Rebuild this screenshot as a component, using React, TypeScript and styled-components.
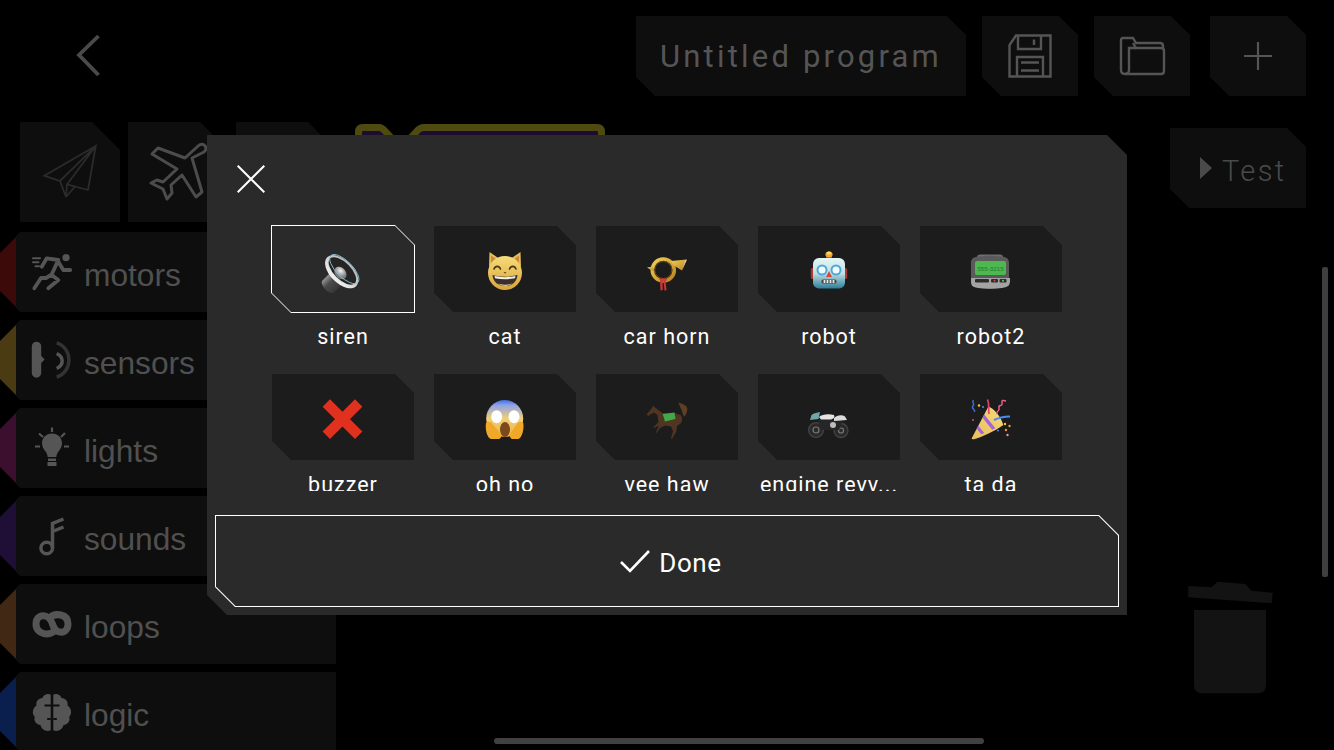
import React from "react";
import styled, { createGlobalStyle, css } from "styled-components";

const Global = createGlobalStyle`
  html, body { margin: 0; padding: 0; background: #000; }
  body { font-family: "Liberation Sans", Arial, sans-serif; }
`;

const notch = (s: number) => css`
  clip-path: polygon(0 0, calc(100% - ${s}px) 0, 100% ${s}px, 100% 100%, ${s}px 100%, 0 calc(100% - ${s}px));
`;

const Page = styled.div`
  position: relative;
  width: 1334px;
  height: 750px;
  overflow: hidden;
  background: #000;
  display: flex;
  flex-direction: column;
`;

const Header = styled.header`
  display: flex;
  align-items: flex-start;
  height: 96px;
  padding: 16px 28px 0 76px;
  box-sizing: border-box;
  flex: none;
`;

const BackButton = styled.div`
  margin-top: 18px;
  width: 26px;
  height: 44px;
  margin-right: auto;
`;

const HeadButton = styled.div<{ $w?: number; $ml?: number }>`
  ${notch(19)}
  width: ${(p) => p.$w ?? 96}px;
  height: 80px;
  margin-left: ${(p) => p.$ml ?? 16}px;
  background: #0e0e0e;
  display: flex;
  align-items: center;
  justify-content: center;
  flex: none;
`;

const ProgramName = styled.span`
  font-family: Roboto, sans-serif;
  font-weight: 400;
  font-size: 31px;
  letter-spacing: 3.2px;
  color: #555;
`;

const Main = styled.main`
  display: grid;
  grid-template-columns: 336px 1fr 164px;
  margin-top: 26px;
  flex: 1;
`;

const LeftColumn = styled.section`
  display: flex;
  flex-direction: column;
`;

const ToolRow = styled.div`
  display: flex;
  gap: 8px;
  padding-left: 20px;
  height: 100px;
`;

const ToolTile = styled.div`
  clip-path: polygon(0 0, 72px 0, 100% 28px, 100% 100%, 0 100%);
  width: 100px;
  height: 100px;
  background: #0e0e0e;
  display: flex;
  align-items: center;
  justify-content: center;
  flex: none;
`;

const Categories = styled.nav`
  display: flex;
  flex-direction: column;
  gap: 8px;
  margin-top: 10px;
`;

const Category = styled.div`
  display: flex;
  height: 80px;
  flex: none;
`;

const CategoryTab = styled.div<{ $color: string }>`
  width: 16px;
  flex: none;
  background: ${(p) => p.$color};
  clip-path: polygon(0 21px, 16px 5px, 16px 75px, 0 59px);
`;

const CategoryBody = styled.div`
  flex: 1;
  background: #0e0e0e;
  clip-path: polygon(4px 0, 100% 0, 100% 100%, 4px 100%, 0 76px, 0 4px);
  display: flex;
  align-items: center;
  padding-left: 16px;
  gap: 12px;
`;

const CategoryIcon = styled.svg`
  width: 40px;
  height: 40px;
  flex: none;
  overflow: visible;
`;

const CategoryName = styled.span`
  font-size: 31.7px;
  color: #505050;
  margin-top: 6px;
`;

const CanvasColumn = styled.section`
  padding: 2px 0 0 19px;
`;

const ProgramBlock = styled.svg`
  display: block;
  width: 250px;
  height: 60px;
`;

const RightRail = styled.aside`
  padding-top: 6px;
  display: flex;
  flex-direction: column;
  align-items: flex-start;
`;

const TestButton = styled.div`
  ${notch(19)}
  width: 136px;
  height: 80px;
  background: #0e0e0e;
  display: flex;
  align-items: center;
  padding-left: 30px;
  box-sizing: border-box;
  gap: 10px;
`;

const TestLabel = styled.span`
  font-family: Roboto, sans-serif;
  font-weight: 300;
  font-size: 29px;
  letter-spacing: 2.4px;
  color: #4a4a4a;
  margin-top: 5px;
`;

const Trash = styled.svg`
  display: block;
  width: 86px;
  height: 112px;
  margin: 374px 0 0 18px;
  overflow: visible;
`;

const ScrollThumb = styled.div`
  position: absolute;
  left: 1322px;
  top: 267px;
  width: 6px;
  height: 310px;
  border-radius: 2px;
  background: #3f3f3f;
`;

const HomeBar = styled.div`
  position: absolute;
  left: 494px;
  top: 738px;
  width: 490px;
  height: 6px;
  border-radius: 3px;
  background: #414141;
`;

const Modal = styled.div`
  ${notch(20)}
  position: absolute;
  left: 207px;
  top: 135px;
  width: 920px;
  height: 480px;
  background: #2a2a2a;
  box-sizing: border-box;
  padding: 0 8px;
  display: flex;
  flex-direction: column;
`;

const CloseButton = styled.div`
  width: 28px;
  height: 28px;
  margin: 30px 0 0 22px;
  flex: none;
`;

const Scroller = styled.div`
  height: 266px;
  margin-top: 32px;
  overflow: hidden;
  flex: none;
  padding-left: 56px;
`;

const SoundGrid = styled.div`
  display: grid;
  grid-template-columns: repeat(5, 144px);
  column-gap: 18px;
  grid-auto-rows: 148px;
`;

const Sound = styled.div`
  display: flex;
  flex-direction: column;
  align-items: center;
`;

const TileFrame = styled.div<{ $selected?: boolean }>`
  ${notch(20)}
  width: 144px;
  height: 88px;
  padding: 1px;
  box-sizing: border-box;
  background: ${(p) => (p.$selected ? "#fff" : "transparent")};
  flex: none;
`;

const TileFill = styled.div<{ $selected?: boolean }>`
  ${notch(19)}
  height: 100%;
  background: ${(p) => (p.$selected ? "#2a2a2a" : "#1c1c1c")};
  display: flex;
  align-items: center;
  justify-content: center;
`;

const Emoji = styled.svg`
  width: 44px;
  height: 44px;
  margin-top: 4px;
  overflow: visible;
`;

const SoundName = styled.span`
  font-family: Roboto, sans-serif;
  font-size: 21.5px;
  letter-spacing: 1px;
  line-height: 26px;
  margin-top: 11px;
  color: #fff;
  white-space: nowrap;
`;

const DoneFrame = styled.div`
  ${notch(20)}
  margin-top: 24px;
  height: 92px;
  padding: 1px;
  box-sizing: border-box;
  background: #fff;
  flex: none;
`;

const DoneFill = styled.div`
  ${notch(19.5)}
  height: 100%;
  background: #2a2a2a;
  display: flex;
  align-items: center;
  justify-content: center;
  gap: 9px;
  padding-left: 8px;
  box-sizing: border-box;
`;

const DoneLabel = styled.span`
  font-family: Roboto, sans-serif;
  font-size: 26px;
  letter-spacing: 0.6px;
  color: #fff;
  margin-top: 3px;
`;

const G = "#555";

const icons: Record<string, React.ReactNode> = {
  motors: (
    <g fill="none" stroke={G} strokeWidth="3.800" strokeLinecap="round" strokeLinejoin="round">
      <circle cx="34" cy="5.700" r="3.600" fill={G} stroke="none" />
      <path d="M26.300 8 19.700 22.500M26.300 9.700 31.300 18H38.200M26.300 8 14.700 6.300 9.700 14.700" />
      <path d="M19.700 23 26.300 28 16.300 36.300M19 23 14 26H9L2.300 36.300" />
      <path d="M1 6.300H8M1 10.300H6.500M3.500 14.300H7" strokeWidth="2" />
    </g>
  ),
  sensors: (
    <g fill="none">
      <path d="M4.500 1.700a4.700 4.700 0 0 1 4.700 4.700v9.400l3.400 3.600-3.400 3.600v10a4.700 4.700 0 0 1-9.400 0V6.400a4.700 4.700 0 0 1 4.700-4.700z" fill={G} />
      <path d="M24.700 13.500C32 17 32 25 24.700 28.500" stroke={G} strokeWidth="3.500" />
      <path d="M24.700 2.800C41 8 41 32 24.700 37" stroke="#333" strokeWidth="3.500" />
    </g>
  ),
  lights: (
    <g fill={G} stroke="none">
      <path d="M20 5.500c-6 0-10 4.400-10 9.700 0 4 2 6 3.600 8.400 1 1.500 1.900 3.400 2.100 5.400h8.600c.2-2 1.100-3.900 2.100-5.400C28 21.200 30 19.200 30 15.200c0-5.300-4-9.700-10-9.700z" />
      <rect x="16" y="30.500" width="8" height="2.500" />
      <rect x="15.500" y="34" width="9" height="4" />
      <g stroke={G} strokeWidth="2.200">
        <path d="M20 -.5V4M3 18.500H8M32 18.500H37M7 5.500 11 9M33 5 29 9" />
      </g>
    </g>
  ),
  sounds: (
    <g fill="none" stroke={G} strokeWidth="3.500">
      <circle cx="14.700" cy="32" r="5.800" />
      <path d="M20.500 32V7.500L31.500 3M20.500 15.500 31.500 11" />
    </g>
  ),
  loops: (
    <path
      d="M23.500 26C18 32.500 4 31 4 20 4 9.500 17 8.500 20.500 20 23.500 31.500 36 30.500 36 20 36 9.500 23 8.500 17.500 14"
      fill="none"
      stroke={G}
      strokeWidth="7"
    />
  ),
  logic: (
    <g fill={G}>
      <path d="M18.700 2.600C15.500 1 11.500 2.800 10.500 6 6.500 6.200 3.500 9.500 4.500 13.500.8 15.800-.6 21.500 2.800 24.800 1.500 29 4 32.600 8.500 33c1 4.500 6 7.400 10.200 5.200z" />
      <path d="M21.300 2.600C24.500 1 28.500 2.800 29.500 6c4 .2 7 3.500 6 7.500 3.700 2.300 5.100 8 1.700 11.300 1.300 4.200-1.200 7.800-5.700 8.200-1 4.500-6 7.400-10.200 5.200z" />
      <path d="M12.500 13.500h6.500M21 13.500h6.500M18.700 27h-3.500M21.300 27h3.500" stroke="#0e0e0e" strokeWidth="1.800" fill="none" />
    </g>
  ),
};

const EmojiDefs = () => (
  <svg width="0" height="0" style={{ position: "absolute" }}>
    <defs>
      <linearGradient id="gCat" x1="0" y1="0" x2="0" y2="1">
        <stop offset="0" stopColor="#f6dc7a" />
        <stop offset="1" stopColor="#d9a63a" />
      </linearGradient>
      <linearGradient id="gRobot" x1="0" y1="0" x2="0" y2="1">
        <stop offset="0" stopColor="#e6f6f6" />
        <stop offset=".5" stopColor="#bfe0e4" />
        <stop offset="1" stopColor="#2f7f98" />
      </linearGradient>
      <linearGradient id="gScream" x1="0" y1="0" x2="0" y2="1">
        <stop offset="0" stopColor="#3f6fe0" />
        <stop offset=".14" stopColor="#8fa3e8" />
        <stop offset=".5" stopColor="#efcf78" />
        <stop offset="1" stopColor="#f3b23a" />
      </linearGradient>
      <linearGradient id="gChrome" x1="0" y1="0" x2="0" y2="1">
        <stop offset="0" stopColor="#b5b5b5" />
        <stop offset="1" stopColor="#f2f2f2" />
      </linearGradient>
      <linearGradient id="gCone" x1="0" y1="0" x2="1" y2="1">
        <stop offset="0" stopColor="#dcdcdc" />
        <stop offset=".45" stopColor="#4a4a4a" />
        <stop offset="1" stopColor="#2a2a2a" />
      </linearGradient>
      <linearGradient id="gParty" x1="0" y1="1" x2="1" y2="0">
        <stop offset="0" stopColor="#e9bf5e" />
        <stop offset="1" stopColor="#f6d977" />
      </linearGradient>
      <linearGradient id="gHorn" x1="0" y1="0" x2="1" y2="1">
        <stop offset="0" stopColor="#f1cf58" />
        <stop offset="1" stopColor="#b98320" />
      </linearGradient>
      <radialGradient id="gDome" cx=".4" cy=".35">
        <stop offset="0" stopColor="#f4f4f4" />
        <stop offset="1" stopColor="#7b7b7b" />
      </radialGradient>
    </defs>
  </svg>
);

const emojis: Record<string, React.ReactNode> = {
  siren: (
    <>
      <path d="M1 32 10 23l12 12-9 8.500c-2.500 1-6 0-8.500-3S0 34.500 1 32z" fill="url(#gCone)" />
      <g transform="rotate(45 20.700 22.700)">
        <ellipse cx="20.700" cy="22.700" rx="20.500" ry="11.500" fill="url(#gChrome)" />
        <ellipse cx="20.700" cy="21.700" rx="17.500" ry="8.500" fill="#242424" />
        <ellipse cx="20.700" cy="24.500" rx="7" ry="5.200" fill="url(#gDome)" />
        <ellipse cx="20.700" cy="19" rx="19" ry="8" fill="none" stroke="#86c0d0" strokeWidth=".9" />
      </g>
    </>
  ),
  cat: (
    <>
      <path d="M6.500 3 16 9.500 6 18zM37.500 3 28 9.500 38 18z" fill="#e7bd55" />
      <path d="M8 6.500 13 10 8 14zM36 6.500 31 10 36 14z" fill="#c98a3c" />
      <ellipse cx="22" cy="24" rx="17" ry="17" fill="url(#gCat)" />
      <path d="M11 20c1.500-3.500 5-3.500 6.500 0M26.500 20c1.500-3.500 5-3.500 6.500 0" fill="none" stroke="#4a3418" strokeWidth="1.600" strokeLinecap="round" />
      <path d="M20.500 23h3l-1.500 1.800z" fill="#6b4a2a" />
      <path d="M9.500 26c8 2.300 17 2.300 25 0-.5 7-6 11-12.500 11S10 33 9.500 26z" fill="#3a2f2a" />
      <path d="M11.500 27c7 1.500 14 1.500 21 0l-.5 2.300c-6.500 1.200-13.500 1.200-20 0z" fill="#f5f1e6" />
      <path d="M15 34.500c4 1.500 10 1.500 14 0-2.500 1.800-5 2.500-7 2.500s-4.500-.7-7-2.500z" fill="#c9c3b4" />
    </>
  ),
  horn: (
    <>
      <circle cx="18.300" cy="21" r="11" fill="none" stroke="url(#gHorn)" strokeWidth="3.600" />
      <circle cx="18.300" cy="21" r="8.500" fill="none" stroke="#7a5414" strokeWidth=".8" />
      <path d="M26 12 41.700 10.500 37 21.500 28 16z" fill="url(#gHorn)" />
      <path d="M40.500 10.800 37.300 20.500 41.800 11z" fill="#d8d2b8" />
      <path d="M2 18.500 8 17.500 9.500 22.500 6 21z" fill="url(#gHorn)" />
      <path d="M14 29.500h8.500l-1.500 3h-5.500z" fill="#d63b3b" />
      <path d="M15 32 15.500 41.500 17.800 41 17.500 32zM18.500 32 19.500 41.800 21.500 41 20.500 32z" fill="#c93636" />
    </>
  ),
  robot: (
    <>
      <path d="M19 7c0-2.500 6-2.500 6 0v3h-6z" fill="#6a4a90" />
      <ellipse cx="22" cy="5.500" rx="3.600" ry="3" fill="#f2a72c" />
      <ellipse cx="22" cy="4" rx="2.400" ry="1.500" fill="#ffd95e" />
      <rect x="3.800" y="19" width="4" height="11" rx="1.500" fill="#a83a30" />
      <rect x="36.200" y="19" width="4" height="11" rx="1.500" fill="#a83a30" />
      <rect x="6" y="9" width="32" height="30.500" rx="6" fill="url(#gRobot)" />
      <circle cx="15" cy="21" r="4.500" fill="#f2fbff" stroke="#4ea8d8" strokeWidth="2" />
      <circle cx="29" cy="21" r="4.500" fill="#f2fbff" stroke="#4ea8d8" strokeWidth="2" />
      <path d="M22 22 25 28H19z" fill="#d04b3c" />
      <rect x="14.500" y="30.500" width="15" height="4" rx="1.500" fill="#40484c" />
      <path d="M17.500 31v3M20.500 31v3M23.500 31v3M26.500 31v3" stroke="#e8e8e8" strokeWidth="1.800" />
    </>
  ),
  pager: (
    <>
      <rect x="8" y="5.500" width="26" height="6" rx="3" fill="#6e6e6e" />
      <path d="M2 14c0-5 3-6 8-6.500 8-1 14-1 22 0 5 .5 8 1.500 8 6.500v18c0 5-3 6-8 7-8 1-14 1-22 0-5-1-8-2-8-7z" fill="#5a5a5a" />
      <path d="M2 29h39v3c0 5-3 6-8 7-8 1-16 1-24 0-5-1-7-2-7-7z" fill="#a3a3a3" />
      <rect x="6" y="12" width="31" height="14" rx="2" fill="#4cb84f" />
      <text x="21.500" y="21.500" textAnchor="middle" fontFamily="Liberation Sans, sans-serif" fontSize="6.200" fill="#257a2c">555-3215</text>
      <rect x="6" y="30" width="14" height="3.500" rx="1" fill="#2c2c2c" />
      <rect x="22" y="30" width="7" height="3.500" rx="1" fill="#2c2c2c" />
      <rect x="30.500" y="30" width="7" height="3.500" rx="1" fill="#2c2c2c" />
      <circle cx="25.500" cy="31.800" r="1" fill="#e23a3a" />
      <circle cx="34" cy="31.800" r="1" fill="#4ad84a" />
    </>
  ),
  cross: <path d="M5.300 6 37.700 38.300M37.700 6 5.300 38.300" stroke="#e0301e" strokeWidth="10.400" fill="none" />,
  scream: (
    <>
      <circle cx="21.700" cy="21.500" r="18.500" fill="url(#gScream)" />
      <ellipse cx="13.700" cy="19.700" rx="5.500" ry="6.500" fill="#fff" />
      <ellipse cx="31" cy="19.700" rx="5.500" ry="6.500" fill="#fff" />
      <ellipse cx="22" cy="32.500" rx="5" ry="7.500" fill="#7a4a1e" />
      <path d="M3 26c2-2 5-1.500 6.500 1l8 9.500c1.500 2.500.5 5-1.500 5.500H8C4 41 2 32 3 26z" fill="#f0a828" />
      <path d="M40.300 26c-2-2-5-1.500-6.500 1l-6.500 9.500c-1 2.500 0 5 1.500 5.500h6.500C39 41 41.300 32 40.300 26z" fill="#f0a828" />
    </>
  ),
  horse: (
    <>
      <path
        d="M1.700 17.300 7 11l1.300-2.500L10 10.500 17.700 16.300 30 16.300 35.700 18C38 21 37.500 25 35 27L32 29 31.500 34 27 42 26 41.500 28 34 26 29.500 20 28.500 15 31 11.500 36.300 11 35 14 28.500 9 31 8.500 30 13.500 25 12.500 18 9 15.500 3 19z"
        fill="#4f3522"
      />
      <path d="M33.300 5.300C38 7 42 9 42.300 11.300 42.500 15 41 18 39 19.700 37.500 17 37 13 35.500 11z" fill="#5e3f26" />
      <path d="M17.700 17 29.500 15.500 30.500 22 20 24.500z" fill="#43a848" />
    </>
  ),
  moto: (
    <>
      <circle cx="9" cy="33" r="7.400" fill="#2a2a2a" stroke="#444" strokeWidth="1.300" />
      <circle cx="9" cy="33" r="3" fill="none" stroke="#777" strokeWidth="1.200" />
      <circle cx="34" cy="33.500" r="7" fill="#2a2a2a" stroke="#444" strokeWidth="1.300" />
      <circle cx="34" cy="33.500" r="2.500" fill="none" stroke="#777" strokeWidth="1.200" />
      <path d="M11 23h25l-4 10H14z" fill="#262626" />
      <path d="M3 23 4.500 18C7 16 10 15.500 13 15L11.500 22z" fill="#6fa6a8" />
      <path d="M12 20c3-3 10-3.500 15-2 1 2 0 4-3 4.500H14z" fill="#e4e4e4" />
      <path d="M27 21c3-3 8-3.500 11-1.500l2 3.500-13 1z" fill="#dadada" />
      <circle cx="26" cy="28" r="3" fill="#bdbdbd" />
    </>
  ),
  party: (
    <>
      <path d="M2.700 41.300 19.300 9.700C25 11 32 20 34.300 28 26 34 13 40 5 42.300 3.500 42.500 2.500 42 2.700 41.300z" fill="url(#gParty)" />
      <path d="M7.700 31.800 12.200 37.300 15.300 36 9.300 28.700zM13.500 20.800 23.200 32.700 26.400 31.300 15.200 17.600z" fill="#a565d8" />
      <path d="M25 23c4-2 9-3.300 16-3.500" fill="none" stroke="#4a8cf0" strokeWidth="2" />
      <path d="M20 17C19 12 21 8 18.500 2.500" fill="none" stroke="#e0466e" strokeWidth="1.700" />
      <path d="M4.500 3C2 6 6.500 6 4 9s3 3 1.500 6" fill="none" stroke="#3f68d8" strokeWidth="1.500" />
      <path d="M28 17c-1-4 3-2 2-6s4-1 3-5 3-2 4-2" fill="none" stroke="#e95d8a" strokeWidth="1.500" />
      <circle cx="10" cy="8.500" r="1.200" fill="#f0c93c" />
      <circle cx="14" cy="10" r="1" fill="#4a8cf0" />
      <circle cx="36" cy="27" r="1.200" fill="#f0c93c" />
      <circle cx="40.500" cy="29" r="1.200" fill="#eb9a3c" />
      <circle cx="37" cy="33" r="1.200" fill="#eb9a3c" />
      <circle cx="38.500" cy="38" r="1.200" fill="#e98ac0" />
      <circle cx="29" cy="33.500" r="1" fill="#4a8cf0" />
      <circle cx="4" cy="23" r="1" fill="#d64a6a" />
    </>
  ),
};

const categories = [
  { name: "motors", color: "#3d0a0a" },
  { name: "sensors", color: "#4b3b12" },
  { name: "lights", color: "#3b0f2d" },
  { name: "sounds", color: "#1f0e36" },
  { name: "loops", color: "#412814" },
  { name: "logic", color: "#0b1f4e" },
];

const sounds = [
  { name: "siren", icon: "siren", selected: true },
  { name: "cat", icon: "cat" },
  { name: "car horn", icon: "horn" },
  { name: "robot", icon: "robot" },
  { name: "robot2", icon: "pager" },
  { name: "buzzer", icon: "cross" },
  { name: "oh no", icon: "scream" },
  { name: "vee haw", icon: "horse" },
  { name: "engine revv...", icon: "moto" },
  { name: "ta da", icon: "party" },
];

export default function App() {
  return (
    <Page>
      <Global />
      <EmojiDefs />
      <Header>
        <BackButton>
          <svg width="26" height="44" viewBox="0 0 26 44" fill="none">
            <path d="M22.500 2 3 21l19.500 20" stroke="#4a4a4a" strokeWidth="3.800" />
          </svg>
        </BackButton>
        <HeadButton $w={330} $ml={0}>
          <ProgramName>Untitled program</ProgramName>
        </HeadButton>
        <HeadButton>
          <svg width="44" height="44" viewBox="0 0 44 44" fill="none" stroke="#555" strokeWidth="2.400">
            <path d="M8 1.500H42.500V42.500H1.500V11z" />
            <path d="M10 1.500V15H33V1.500M26 5.500V11M9 42.500V23H35V42.500M13 28.500H31M13 36.500H31" />
          </svg>
        </HeadButton>
        <HeadButton>
          <svg width="48" height="40" viewBox="0 0 48 40" fill="none" stroke="#555" strokeWidth="2.400">
            <path d="M3 34V4q0-2 2-2h10l3 5h24q3 0 3 3v2" />
            <path d="M7 38h36q3 0 3-3V15q0-3-3-3H18l-3-5" />
            <path d="M3 34q0 4 4 4t4-4V12h7" />
          </svg>
        </HeadButton>
        <HeadButton $ml={20}>
          <svg width="30" height="30" viewBox="0 0 30 30" stroke="#555" strokeWidth="2.200">
            <path d="M15 1V29M1 15H29" />
          </svg>
        </HeadButton>
      </Header>

      <Main>
        <LeftColumn>
          <ToolRow>
            <ToolTile>
              <svg width="100" height="100" viewBox="0 0 100 100" fill="none" stroke="#2b2b2b" strokeWidth="1.800">
                <path d="M75.700 24 24.300 53.700 40 59 75.700 24 68 68 47 62.500 46 75 40 59M47 62.500 75.700 24M46 75 55 64.500" />
              </svg>
            </ToolTile>
            <ToolTile>
              <svg width="100" height="100" viewBox="0 0 100 100" fill="none" stroke="#4c4c4c" strokeWidth="3" strokeLinejoin="round">
                <path d="M57 36 30 26 24 32 49 47 35 60 29 58 23 61 35 67 39 77 44 71 43 63 54 53 68 75 74 70 64 36 76 30Q80 26 76 23 73 21 69 25Z" />
              </svg>
            </ToolTile>
            <ToolTile />
          </ToolRow>
          <Categories>
            {categories.map((c) => (
              <Category key={c.name}>
                <CategoryTab $color={c.color} />
                <CategoryBody>
                  <CategoryIcon viewBox="0 0 40 40">{icons[c.name]}</CategoryIcon>
                  <CategoryName>{c.name}</CategoryName>
                </CategoryBody>
              </Category>
            ))}
          </Categories>
        </LeftColumn>

        <CanvasColumn>
          <ProgramBlock viewBox="0 0 250 60" fill="#1c0c30" stroke="#4f4a10" strokeWidth="7">
            <path d="M3.500 60V8Q3.500 3.500 8 3.500H24Q27 3.500 30 7L42 20H50L62 7Q65 3.500 69 3.500H242Q246.500 3.500 246.500 8V60Z" />
          </ProgramBlock>
        </CanvasColumn>

        <RightRail>
          <TestButton>
            <svg width="12" height="22" viewBox="0 0 12 22">
              <path d="M0 0 12 11 0 22z" fill="#4a4a4a" />
            </svg>
            <TestLabel>Test</TestLabel>
          </TestButton>
          <Trash viewBox="0 0 86 112" fill="#131313">
            <path d="M.3 4 23.700 5.300 29.300-.3 57 2 63.700 8.700 84.700 10.700 83.700 21.300.3 15.300z" />
            <path d="M6 28H78V103Q78 111.300 70 111.300H14Q6 111.300 6 103z" />
          </Trash>
        </RightRail>
      </Main>

      <ScrollThumb />
      <HomeBar />

      <Modal>
        <CloseButton>
          <svg width="28" height="28" viewBox="0 0 28 28" stroke="#fff" strokeWidth="2" fill="none">
            <path d="M.7.7 27.300 27.300M27.300.7.7 27.300" />
          </svg>
        </CloseButton>
        <Scroller>
          <SoundGrid>
            {sounds.map((s) => (
              <Sound key={s.name}>
                <TileFrame $selected={s.selected}>
                  <TileFill $selected={s.selected}>
                    <Emoji viewBox="0 0 44 44">{emojis[s.icon]}</Emoji>
                  </TileFill>
                </TileFrame>
                <SoundName>{s.name}</SoundName>
              </Sound>
            ))}
          </SoundGrid>
        </Scroller>
        <DoneFrame>
          <DoneFill>
            <svg width="30" height="24" viewBox="0 0 30 24" fill="none" stroke="#fff" strokeWidth="2.600">
              <path d="M1 13 10 22 29 2" />
            </svg>
            <DoneLabel>Done</DoneLabel>
          </DoneFill>
        </DoneFrame>
      </Modal>
    </Page>
  );
}
